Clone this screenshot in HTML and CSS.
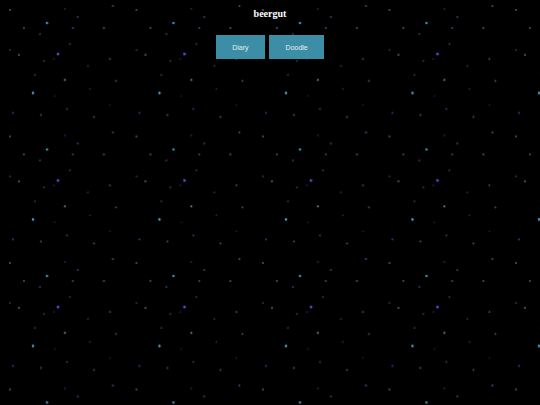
FILE: index.html
```html
<!DOCTYPE html>
<html>
<head>
<meta charset="utf-8">
<title>beergut</title>
<link rel="stylesheet" href="styles.css">
</head>
<body>
<div class="page">
  <h1 class="title">beergut</h1>
  <nav class="menu">
    <a class="btn" href="#">Diary</a>
    <a class="btn" href="#">Doodle</a>
  </nav>
</div>
</body>
</html>
```
FILE: styles.css
```css
html, body {
  margin: 0;
  padding: 0;
  height: 100%;
}
body {
  background-color: #000;
  background-image:
    radial-gradient(circle at 10px 10px, #34425a 0.8px, transparent 1.3px),
    radial-gradient(circle at 47px 23px, #3590ad 1px, transparent 1.6px),
    radial-gradient(circle at 65px 9px, #1c2446 0.7px, transparent 1.2px),
    radial-gradient(circle at 78px 17px, #263a66 0.8px, transparent 1.3px),
    radial-gradient(circle at 113px 6px, #284a78 0.8px, transparent 1.3px),
    radial-gradient(circle at 24px 28px, #344252 0.8px, transparent 1.3px),
    radial-gradient(circle at 40px 34px, #2b3452 0.7px, transparent 1.2px),
    radial-gradient(circle at 73px 28px, #2c4466 0.8px, transparent 1.3px),
    radial-gradient(circle at 104px 28px, #444a58 0.8px, transparent 1.3px),
    radial-gradient(circle at 70px 44px, #263456 0.7px, transparent 1.2px),
    radial-gradient(circle at 10px 50px, #262c3a 0.7px, transparent 1.2px),
    radial-gradient(circle at 19px 55px, #444f58 0.8px, transparent 1.3px),
    radial-gradient(circle at 58px 54px, #5e4ad8 1px, transparent 1.7px),
    radial-gradient(circle at 44px 61px, #2b3448 0.7px, transparent 1.2px),
    radial-gradient(circle at 54px 59px, #1c1848 0.7px, transparent 1.2px),
    radial-gradient(circle at 88px 66px, #263448 0.7px, transparent 1.2px),
    radial-gradient(circle at 110px 59px, #344258 0.8px, transparent 1.3px),
    radial-gradient(circle at 35px 75px, #263456 0.7px, transparent 1.2px),
    radial-gradient(circle at 65px 80px, #7a7256 0.8px, transparent 1.3px),
    radial-gradient(circle at 116px 81px, #344262 0.8px, transparent 1.3px),
    radial-gradient(circle at 33px 93px, #4c98b8 1px, transparent 1.6px),
    radial-gradient(circle at 90px 89px, #262c48 0.7px, transparent 1.2px),
    radial-gradient(circle at 55px 96px, #181d2c 0.7px, transparent 1.2px),
    radial-gradient(circle at 13px 113px, #263478 0.8px, transparent 1.3px),
    radial-gradient(circle at 41px 115px, #344262 0.8px, transparent 1.3px),
    radial-gradient(circle at 67px 109px, #263466 0.8px, transparent 1.3px),
    radial-gradient(circle at 94px 117px, #344268 0.8px, transparent 1.3px),
    radial-gradient(circle at 110px 105px, #181d3a 0.7px, transparent 1.2px);
  background-size: 126.5px 126.5px;
  background-repeat: repeat;
}
.page {
  display: flex;
  flex-direction: column;
  align-items: center;
  padding-top: 8px;
}
.title {
  margin: 0;
  font-family: "Liberation Serif", "Times New Roman", serif;
  font-weight: bold;
  font-size: 10px;
  line-height: 12px;
  color: #ffffff;
}
.menu {
  display: flex;
  gap: 4px;
  margin-top: 15px;
}
.btn {
  display: flex;
  align-items: center;
  justify-content: center;
  height: 24px;
  padding: 0 16.5px;
  background: #3b8ea5;
  color: #e4eef1;
  font-family: "Liberation Sans", Arial, sans-serif;
  font-size: 7px;
  text-decoration: none;
}
```
